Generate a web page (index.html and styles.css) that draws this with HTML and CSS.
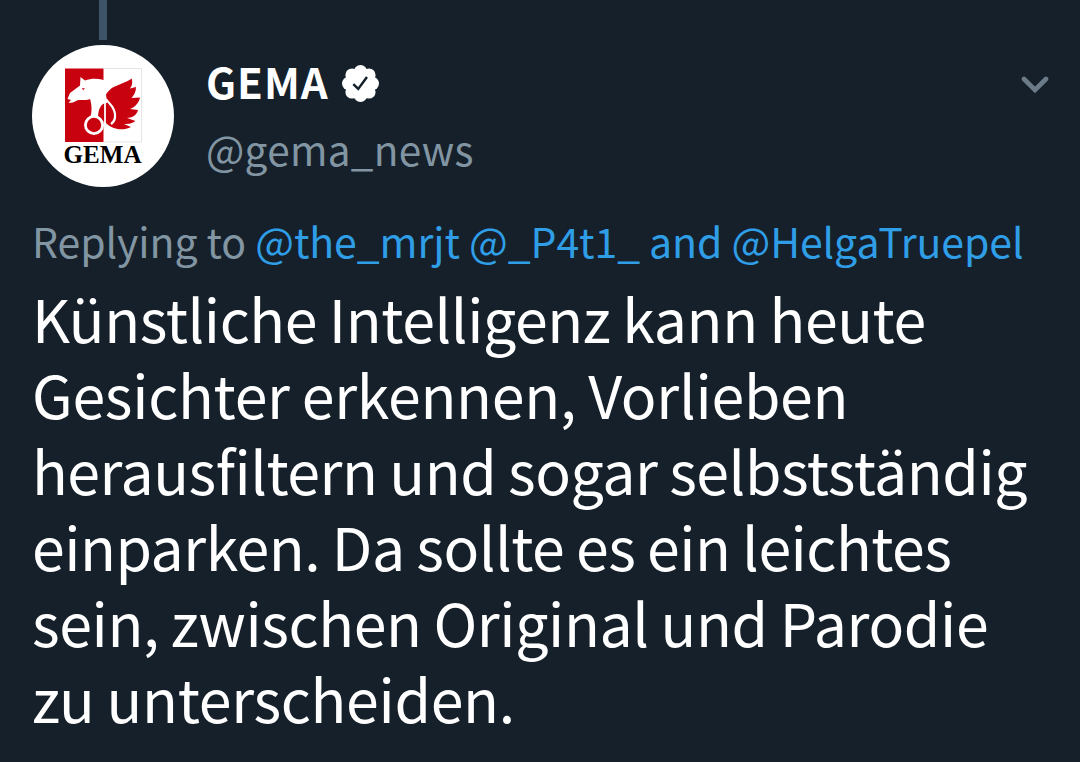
FILE: index.html
```html
<!DOCTYPE html>
<html lang="de">
<head>
<meta charset="utf-8">
<title>GEMA</title>
<link rel="stylesheet" href="styles.css">
</head>
<body>
<article class="tweet">
  <div class="thread"></div>
  <header class="header">
    <svg class="avatar" viewBox="0 0 142 142">
      <circle cx="71" cy="71" r="71" fill="#fff"/>
      <path d="M33 23.500H71.500V97H33Z" fill="#c9020f"/>
      <path d="M71.500 23.500H109.500V97H71.500" fill="none" stroke="#dedede" stroke-width=".8"/>
      <path d="M74 49C78 42 85 41 91 38C96 36 98 35 99.500 33.500C101 37 100 41 98 43.500L104 42C104 47 102 50 99.500 53L108 52.500C107 58 103 62 98 64L106 65C105 70 100 73 95 73L103.500 76C99 79 96 79 92 79L99 82C91 86 80 85 73 77L63 72C64 64 68 55 74 49Z" fill="#c9020f"/>
      <path d="M35.500 54L38 48L48 40.500L48.500 32L53 35.500C60 33 69 33 76 37L81 41L74 49L75 58C69 58 66 64 66 73H58C60 68 60 60 58 54C54 56 48 54 45 55.500L41 57.500L36.500 58L39 55Z" fill="#fff"/>
      <path d="M50 43l3 .5-2 1.700z" fill="#c9020f"/>
      <circle cx="62" cy="80" r="8.600" fill="#c9020f" stroke="#fff" stroke-width="2.800"/>
      <path d="M73 52V79" fill="none" stroke="#fff" stroke-width="1.800"/>
      <path d="M74 54C78 60 82 61 83 69C83.500 74 82 77 79 79" fill="none" stroke="#fff" stroke-width="2.200"/>
      <text class="logo-text" x="31.500" y="118.300" textLength="78" lengthAdjust="spacingAndGlyphs">GEMA</text>
    </svg>
    <div class="author">
      <div class="name-row"><span class="name">GEMA</span>
        <svg class="verified" viewBox="0 0 36 36">
          <g fill="#fff"><circle cx="18" cy="18" r="14"/><circle cx="18" cy="6.500" r="6.500"/><circle cx="26.200" cy="9.800" r="6.500"/><circle cx="29.500" cy="18" r="6.500"/><circle cx="26.200" cy="26.200" r="6.500"/><circle cx="18" cy="29.500" r="6.500"/><circle cx="9.800" cy="26.200" r="6.500"/><circle cx="6.500" cy="18" r="6.500"/><circle cx="9.800" cy="9.800" r="6.500"/></g>
          <path d="M11 18.500L15.800 23.300L24.300 11.700" fill="none" stroke="#15202a" stroke-width="2.400"/>
        </svg>
      </div>
      <div class="handle">@gema_news</div>
    </div>
    <svg class="chevron" viewBox="0 0 28 18"><path d="M3 3L14 14L25 3" fill="none" stroke="#6b7b88" stroke-width="4.600" stroke-linecap="round"/></svg>
  </header>
  <div class="reply">Replying to <span class="mention">@the_mrjt @_P4t1_ and @HelgaTruepel</span></div>
  <div class="body">
    <div class="line intro">Künstliche Intelligenz kann heute</div>
    <div class="line faces">Gesichter erkennen, Vorlieben</div>
    <div class="line filter">herausfiltern und sogar selbstständig</div>
    <div class="line parking">einparken. Da sollte es ein leichtes</div>
    <div class="line parody">sein, zwischen Original und Parodie</div>
    <div class="line closing">zu unterscheiden.</div>
  </div>
</article>
</body>
</html>
```
FILE: styles.css
```css
* { box-sizing: border-box; }
body { margin: 0; background: #15202a; font-family: "Noto Sans CJK SC", "Noto Sans", sans-serif; white-space: nowrap; }
.tweet { height: 762px; overflow: hidden; padding: 0 31px 0 32px; }
.thread { width: 8px; height: 40px; margin-left: 67px; background: #3d5467; }
.header { display: flex; height: 172px; padding-top: 5px; }
.avatar { width: 142px; height: 142px; flex: none; }
.logo-text { font: bold 26px "Liberation Serif", serif; fill: #000; }
.author { flex: 1; padding: 8px 0 0 32px; }
.name-row { display: flex; align-items: center; gap: 13px; height: 56px; }
.name { color: #fff; font-weight: 700; font-size: 42px; line-height: 56px; letter-spacing: 1px; }
.verified { width: 37px; height: 37px; margin-top: 4px; }
.handle { color: #8295a2; font-size: 40.500px; letter-spacing: .3px; line-height: 56px; margin-top: 12px; }
.chevron { width: 28px; height: 18px; margin-top: 31px; }
.reply { height: 68px; line-height: 56px; font-size: 41px; letter-spacing: -.08px; color: #8295a2; }
.mention { color: #2f9ee6; }
.body { color: #fff; font-size: 59px; line-height: 76px; word-spacing: -1px; }
.line { height: 76px; }
.intro { letter-spacing: -.41px; }
.faces { letter-spacing: -.25px; }
.filter { letter-spacing: -.46px; }
.parking { letter-spacing: -.5px; }
.parody { letter-spacing: -.38px; }
.closing { letter-spacing: -.3px; }
```
